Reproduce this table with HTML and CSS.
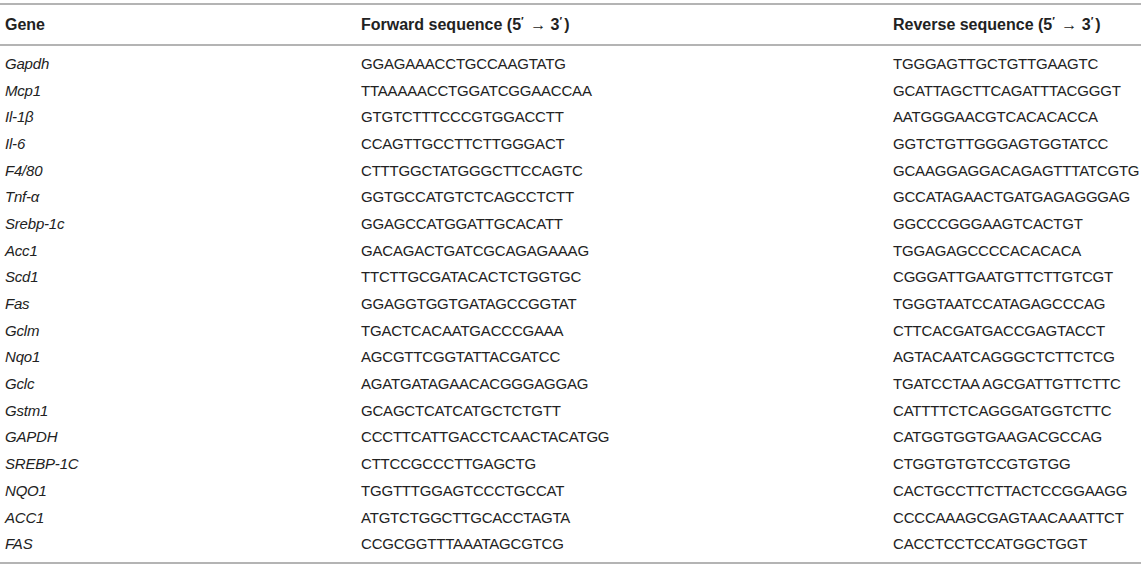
FILE: index.html
```html
<!DOCTYPE html>
<html lang="en">
<head>
<meta charset="utf-8">
<title>Primer sequences</title>
<link rel="stylesheet" href="styles.css">
</head>
<body>
<table class="primers">
  <colgroup>
    <col class="col-gene">
    <col class="col-fwd">
    <col class="col-rev">
  </colgroup>
  <thead>
    <tr>
      <th class="c-gene">Gene</th>
      <th>Forward sequence (5<span class="pr">′</span> → 3<span class="pr">′</span>)</th>
      <th>Reverse sequence (5<span class="pr">′</span> → 3<span class="pr">′</span>)</th>
    </tr>
  </thead>
  <tbody>
    <tr class="first"><td class="gene">Gapdh</td><td>GGAGAAACCTGCCAAGTATG</td><td>TGGGAGTTGCTGTTGAAGTC</td></tr>
    <tr><td class="gene">Mcp1</td><td>TTAAAAACCTGGATCGGAACCAA</td><td>GCATTAGCTTCAGATTTACGGGT</td></tr>
    <tr><td class="gene">Il-1β</td><td>GTGTCTTTCCCGTGGACCTT</td><td>AATGGGAACGTCACACACCA</td></tr>
    <tr><td class="gene">Il-6</td><td>CCAGTTGCCTTCTTGGGACT</td><td>GGTCTGTTGGGAGTGGTATCC</td></tr>
    <tr><td class="gene">F4/80</td><td>CTTTGGCTATGGGCTTCCAGTC</td><td>GCAAGGAGGACAGAGTTTATCGTG</td></tr>
    <tr><td class="gene">Tnf-α</td><td>GGTGCCATGTCTCAGCCTCTT</td><td>GCCATAGAACTGATGAGAGGGAG</td></tr>
    <tr><td class="gene">Srebp-1c</td><td>GGAGCCATGGATTGCACATT</td><td>GGCCCGGGAAGTCACTGT</td></tr>
    <tr><td class="gene">Acc1</td><td>GACAGACTGATCGCAGAGAAAG</td><td>TGGAGAGCCCCACACACA</td></tr>
    <tr><td class="gene">Scd1</td><td>TTCTTGCGATACACTCTGGTGC</td><td>CGGGATTGAATGTTCTTGTCGT</td></tr>
    <tr><td class="gene">Fas</td><td>GGAGGTGGTGATAGCCGGTAT</td><td>TGGGTAATCCATAGAGCCCAG</td></tr>
    <tr><td class="gene">Gclm</td><td>TGACTCACAATGACCCGAAA</td><td>CTTCACGATGACCGAGTACCT</td></tr>
    <tr><td class="gene">Nqo1</td><td>AGCGTTCGGTATTACGATCC</td><td>AGTACAATCAGGGCTCTTCTCG</td></tr>
    <tr><td class="gene">Gclc</td><td>AGATGATAGAACACGGGAGGAG</td><td>TGATCCTAA AGCGATTGTTCTTC</td></tr>
    <tr><td class="gene">Gstm1</td><td>GCAGCTCATCATGCTCTGTT</td><td>CATTTTCTCAGGGATGGTCTTC</td></tr>
    <tr><td class="gene">GAPDH</td><td>CCCTTCATTGACCTCAACTACATGG</td><td>CATGGTGGTGAAGACGCCAG</td></tr>
    <tr><td class="gene">SREBP-1C</td><td>CTTCCGCCCTTGAGCTG</td><td>CTGGTGTGTCCGTGTGG</td></tr>
    <tr><td class="gene">NQO1</td><td>TGGTTTGGAGTCCCTGCCAT</td><td>CACTGCCTTCTTACTCCGGAAGG</td></tr>
    <tr><td class="gene">ACC1</td><td>ATGTCTGGCTTGCACCTAGTA</td><td>CCCCAAAGCGAGTAACAAATTCT</td></tr>
    <tr class="last"><td class="gene">FAS</td><td>CCGCGGTTTAAATAGCGTCG</td><td>CACCTCCTCCATGGCTGGT</td></tr>
  </tbody>
</table>
</body>
</html>
```

FILE: styles.css
```css
html, body {
  margin: 0;
  padding: 0;
  background: #ffffff;
}

body {
  padding-top: 3px;
  font-family: "Liberation Sans", Arial, Helvetica, sans-serif;
  color: #222222;
}

.primers {
  width: 1141px;
  table-layout: fixed;
  border-collapse: collapse;
  border-top: 2px solid #b4b4b4;
  border-bottom: 2px solid #b4b4b4;
  font-size: 15px;
  letter-spacing: -0.2px;
}

.col-gene { width: 361px; }
.col-fwd { width: 532px; }
.col-rev { width: 248px; }

.primers th,
.primers td {
  text-align: left;
  padding: 0 0 0 0;
  white-space: nowrap;
  vertical-align: middle;
}

.primers th:first-child,
.primers td:first-child {
  padding-left: 5px;
}

.primers thead th {
  height: 39px;
  font-size: 16px;
  font-weight: bold;
  border-bottom: 2px solid #b4b4b4;
  letter-spacing: 0;
}

.pr {
  font-size: 11px;
  position: relative;
  top: -5px;
  margin-right: 2px;
}

.primers td {
  height: 26.7px;
}

.primers tr.first td {
  padding-top: 4px;
}

.primers tr.last td {
  padding-bottom: 5px;
}

.gene {
  font-style: italic;
}
```
